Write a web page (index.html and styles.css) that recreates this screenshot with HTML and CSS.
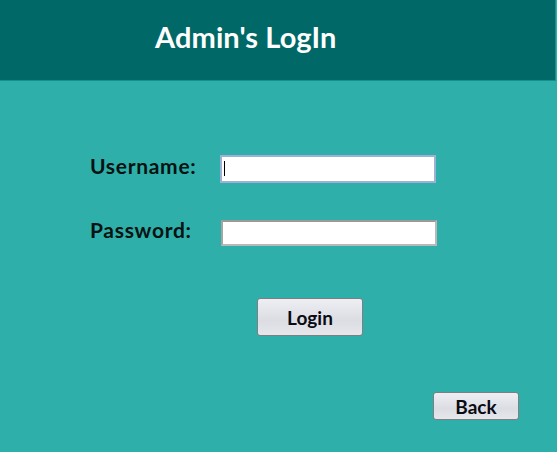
FILE: index.html
```html
<!DOCTYPE html>
<html>
<head>
<meta charset="utf-8">
<link rel="stylesheet" href="styles.css">
</head>
<body>
<header class="header"><h1 class="title">Admin's LogIn</h1></header>
<main class="main">
  <form class="form">
    <div class="row">
      <label class="label">Username:</label>
      <div class="field-wrap">
        <input class="field field-focus" type="text">
        <span class="caret"></span>
      </div>
    </div>
    <div class="row row-pass">
      <label class="label">Password:</label>
      <input class="field field-pass" type="password">
    </div>
    <div class="actions">
      <button class="btn btn-login" type="button">Login</button>
    </div>
  </form>
  <div class="back-row">
    <button class="btn btn-back" type="button">Back</button>
  </div>
</main>
</body>
</html>
```
FILE: styles.css
```css
html, body {
  margin: 0;
  padding: 0;
  background: #2eafa9;
  font-family: "Lato", "Open Sans", sans-serif;
}
.header {
  height: 80px;
  width: 400px;
  padding-left: 155px;
  background: #006967;
  border-right: 1px solid #14918c;
  border-bottom: 1px solid #14918c;
  display: flex;
  align-items: center;
}
.title {
  margin: 0;
  color: #ffffff;
  font-size: 29px;
  font-weight: 700;
  padding-bottom: 8px;
  letter-spacing: 0.1px;
}
.main {
  display: flex;
  flex-direction: column;
}
.form {
  padding: 74px 0 0 90px;
  display: flex;
  flex-direction: column;
}
.row {
  display: flex;
  align-items: center;
  height: 28px;
}
.row-pass {
  margin-top: 36px;
}
.label {
  width: 130px;
  font-size: 21px;
  font-weight: 700;
  letter-spacing: 0.7px;
  color: #061212;
  padding-bottom: 7px;
}
.field-wrap {
  position: relative;
  display: flex;
}
.caret {
  position: absolute;
  left: 4px;
  top: 6px;
  width: 1px;
  height: 15px;
  background: #000;
}
.field {
  box-sizing: border-box;
  width: 216px;
  height: 26px;
  border: 2px solid #b9b9b9;
  border-top-color: #9a9a9a;
  border-left-color: #a5a5a5;
  background: #fff;
  outline: none;
  margin: 0;
  caret-color: transparent;
}
.field-pass {
  margin-left: 1px;
}
.field-focus {
  border: 2px solid #9db0d6;
  height: 28px;
}
.actions {
  display: flex;
  padding-left: 167px;
  margin-top: 51px;
}
.btn {
  font-family: "Lato", "Open Sans", sans-serif;
  font-weight: 700;
  color: #0a0a14;
  background: linear-gradient(#eeeff3, #dcdde3 60%, #e6e7eb);
  border: 1px solid #7d7f85;
  border-radius: 3px;
  box-sizing: border-box;
  padding: 0;
}
.btn-login {
  width: 106px;
  height: 38px;
  font-size: 19px;
}
.back-row {
  display: flex;
  justify-content: flex-end;
  padding-right: 38px;
  margin-top: 56px;
}
.btn-back {
  width: 86px;
  height: 28px;
  font-size: 19px;
}
```
